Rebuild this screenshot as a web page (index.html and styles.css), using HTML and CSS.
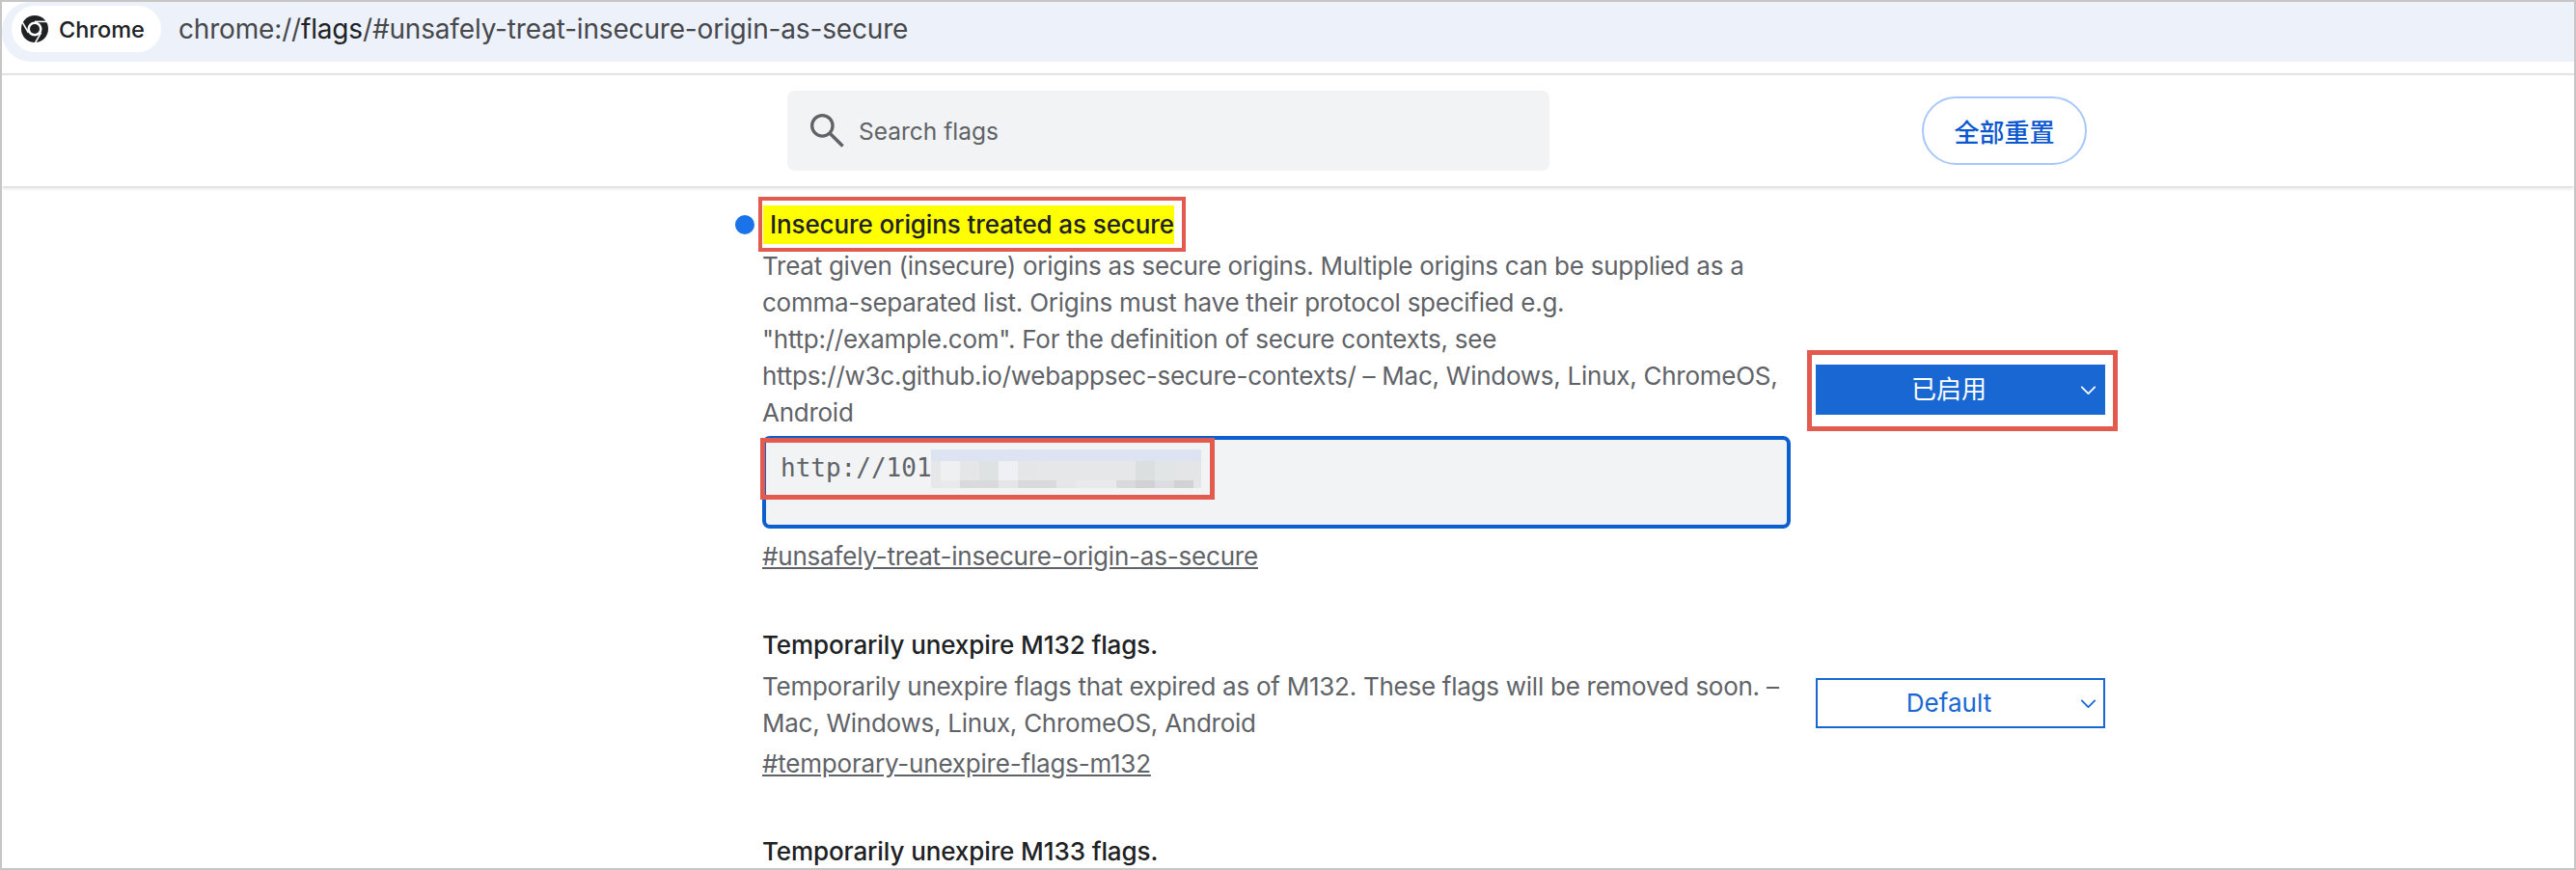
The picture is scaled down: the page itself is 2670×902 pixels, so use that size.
FILE: index.html
```html
<!DOCTYPE html>
<html lang="en">
<head>
<meta charset="utf-8">
<title>chrome://flags</title>
<link rel="stylesheet" href="styles.css">
</head>
<body>
<div class="frame">
  <header class="omnibox">
    <div class="chip">
      <svg class="chrome-logo" viewBox="0 0 28 28" aria-hidden="true">
        <circle cx="14" cy="14" r="14" fill="#202124"/>
        <circle cx="14" cy="14" r="7.6" fill="#fff"/>
        <circle cx="14" cy="14" r="5" fill="#202124"/>
        <path d="M14 6.4 H29" stroke="#fff" stroke-width="1.6"/>
        <path d="M14 6.4 H29" stroke="#fff" stroke-width="1.6" transform="rotate(120 14 14)"/>
        <path d="M14 6.4 H29" stroke="#fff" stroke-width="1.6" transform="rotate(240 14 14)"/>
      </svg>
      <span class="chip-label">Chrome</span>
    </div>
    <span class="url">chrome://<b class="url-host">flags</b>/#unsafely-treat-insecure-origin-as-secure</span>
  </header>
  <div class="gap"></div>
  <div class="toolbar">
    <div class="search">
      <svg class="search-icon" viewBox="0 0 36 36" aria-hidden="true">
        <circle cx="12.7" cy="12.7" r="11" fill="none" stroke="#5f6368" stroke-width="3.4"/>
        <path d="M21 21 L34.5 34.5" stroke="#5f6368" stroke-width="3.6" fill="none"/>
      </svg>
      <span>Search flags</span>
    </div>
    <button class="reset">全部重置</button>
  </div>
  <main class="flags">
    <section class="flag flag-first">
      <div class="flag-text">
        <h2 class="flag-title title-active">
          <span class="dot"></span>
          <span class="mark">Insecure origins treated as secure<i class="annot annot-title"></i></span>
        </h2>
        <p class="desc">Treat given (insecure) origins as secure origins. Multiple origins can be supplied as a<br>comma-separated list. Origins must have their protocol specified e.g.<br>"http://example.com". For the definition of secure contexts, see<br>https://w3c.github.io/webappsec-secure-contexts/ – Mac, Windows, Linux, ChromeOS,<br>Android</p>
        <div class="origin-box">
          <span class="origin-value">http://101<span class="mosaic"><i class="m-top"></i><i class="m-mid"></i><i class="m-low"></i></span><i class="annot annot-input"></i></span>
        </div>
        <a class="permalink link-first">#unsafely-treat-insecure-origin-as-secure</a>
      </div>
      <div class="flag-control control-first">
        <div class="select select-on">已启用
          <svg class="chev" viewBox="0 0 18 10" aria-hidden="true"><path d="M1 1 L9 9 L17 1" fill="none" stroke="currentColor" stroke-width="2"/></svg>
          <i class="annot annot-select"></i>
        </div>
      </div>
    </section>
    <section class="flag flag-second">
      <div class="flag-text">
        <h2 class="flag-title title-plain">Temporarily unexpire M132 flags.</h2>
        <p class="desc">Temporarily unexpire flags that expired as of M132. These flags will be removed soon. –<br>Mac, Windows, Linux, ChromeOS, Android</p>
        <a class="permalink link-second">#temporary-unexpire-flags-m132</a>
      </div>
      <div class="flag-control control-second">
        <div class="select">Default
          <svg class="chev" viewBox="0 0 18 10" aria-hidden="true"><path d="M1 1 L9 9 L17 1" fill="none" stroke="currentColor" stroke-width="2"/></svg>
        </div>
      </div>
    </section>
    <section class="flag flag-third">
      <div class="flag-text">
        <h2 class="flag-title title-plain">Temporarily unexpire M133 flags.</h2>
      </div>
    </section>
  </main>
</div>
</body>
</html>
```
FILE: styles.css
```css
* { box-sizing: border-box; }
html, body { margin: 0; padding: 0; height: 902px; overflow: hidden; background: #fff; }
body { font-family: Inter, "Noto Sans CJK SC", sans-serif; color: #5f6368; }

.frame { height: 902px; border: 2px solid #c6c6c6; overflow: hidden; display: flex; flex-direction: column; }

.omnibox { height: 62px; flex: none; background: #edf1f9; border-radius: 30px 0 0 30px; display: flex; align-items: flex-start; padding: 4px 0 0 10px; }
.chip { width: 155px; height: 48px; border-radius: 24px; background: #fff; display: flex; align-items: center; padding-left: 10px; gap: 11px; }
.chrome-logo { width: 28px; height: 28px; flex: none; }
.chip-label { font-size: 23.5px; font-weight: 500; color: #202124; }
.url { margin: 7px 0 0 18px; font-size: 28px; letter-spacing: -0.17px; line-height: 34px; color: #46484c; white-space: nowrap; }
.url-host { font-weight: 400; color: #202124; }

.gap { height: 12px; flex: none; }
.toolbar { height: 117px; flex: none; border-top: 2px solid #e3e3e3; box-shadow: 0 2px 4px rgba(0,0,0,.16); display: flex; align-items: flex-start; padding: 16px 0 0 814px; position: relative; }
.search { width: 790px; height: 83px; background: #f1f3f4; border-radius: 8px; display: flex; align-items: center; padding-left: 24px; gap: 15px; font-size: 24.5px; color: #5f6368; }
.search-icon { width: 35px; height: 35px; flex: none; }
.reset { margin: 6px 0 0 386px; width: 171px; height: 71px; border-radius: 36px; border: 2px solid #a8c7fa; background: #fff; color: #0b57d0; font: 500 26px "Noto Sans CJK SC", sans-serif; padding: 0; }

.flags { flex: 1; padding-left: 789px; display: flex; flex-direction: column; }
.flag { display: flex; }
.flag-text { width: 1066px; flex: none; }
.flag-title { margin: 0; font-size: 26px; font-weight: 500; letter-spacing: -0.1px; line-height: 40px; color: #202124; }
.title-plain { margin-left: -1px; }
.title-active { position: relative; }
.dot { position: absolute; left: -29px; top: 10px; width: 20px; height: 20px; border-radius: 50%; background: #1a73e8; }
.mark { display: inline-block; background: #ff0; padding: 0 0 0 7px; position: relative; }
.desc { margin: 4px 0 0 -1px; font-size: 26px; letter-spacing: -0.26px; line-height: 38px; color: #5f6368; white-space: nowrap; }
.permalink { display: block; margin-left: -1px; font-size: 26px; letter-spacing: -0.2px; line-height: 38px; color: #5f6368; text-decoration: underline; }
.link-first { margin-top: 10px; }
.link-second { margin-top: 4px; }

.flag-first { padding-top: 20px; }
.origin-box { margin: 5px 0 0 -1px; width: 1066px; height: 96px; background: #f1f3f4; border: 4px solid #0b5fce; border-radius: 8px; padding: 7px 0 0 15px; font: 26px/44px "DejaVu Sans Mono", monospace; color: #5f6368; }
.origin-value { position: relative; display: inline-flex; align-items: flex-start; }
.mosaic { position: relative; display: flex; flex-direction: column; width: 280px; height: 40px; margin: 3px 0 0 -1px; }
.mosaic i { display: block; }
.m-top { height: 12px; background: #dde3f0; }
.m-mid { height: 20px; background: linear-gradient(90deg, #e5e7e8 10px, #eef0f2 10px 30px, #e5e6e7 30px 50px, #dfe2e3 50px 70px, #eef0f3 70px 90px, #e5e6e8 90px 110px, #e6e7e8 110px 212px, #dcdfe0 212px 232px, #e2e5e6 232px 252px, #e4e5e7 252px); }
.m-low { height: 8px; background: linear-gradient(90deg, #e5e7e8 10px, #e9eaec 10px 30px, #d9dadc 30px 70px, #e4e6e8 70px 90px, #d9dadc 90px 130px, #e6e7e9 130px 150px, #e9eaec 150px 192px, #d9dadc 192px 212px, #d0d2d4 212px 232px, #dcdde0 232px 252px, #d0d2d4 252px 272px, #e5e6e8 272px); }

.flag-control { flex: none; margin-left: 25px; }
.control-first { padding-top: 165px; }
.control-second { padding-top: 54px; }
.select { position: relative; width: 300px; height: 52px; border: 2px solid #1967d2; color: #1967d2; font: 400 26px/48px Inter, "Noto Sans CJK SC", sans-serif; text-align: center; padding-right: 24px; }
.select-on { background: #1967d2; color: #fff; }
.chev { position: absolute; right: 7px; top: 20px; width: 17px; height: 9px; }

.annot { position: absolute; display: block; border: 5px solid #e35b4f; pointer-events: none; }
.annot-title { inset: -9px -12px -8px -5px; border-width: 4px; }
.annot-input { inset: -9px -14px -11px -21px; }
.annot-select { inset: -17px -15px -19px -11px; }

.flag-second { padding-top: 53px; }
.flag-third { padding-top: 52px; }
```
